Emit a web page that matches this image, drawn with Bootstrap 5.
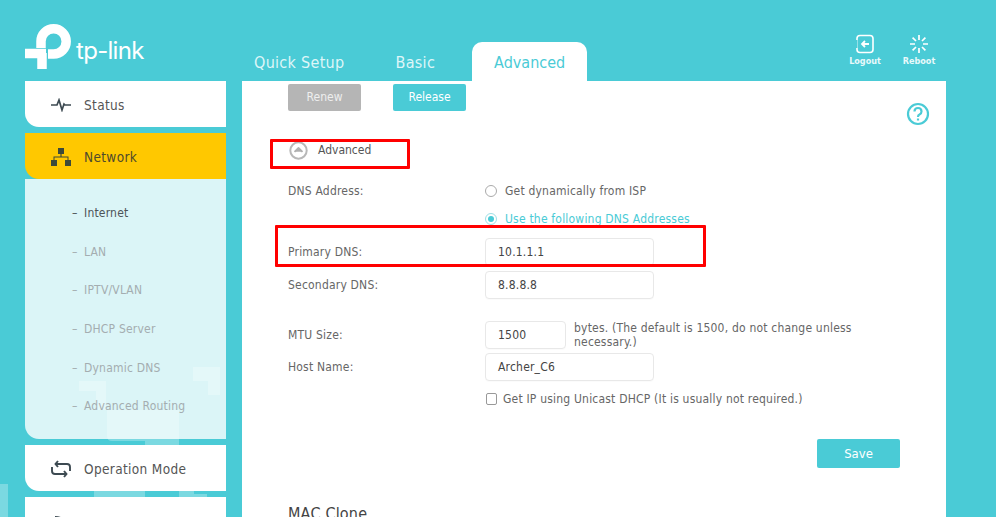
<!DOCTYPE html>
<html lang="en">
<head>
<meta charset="utf-8">
<title>TP-Link Advanced</title>
<link href="https://cdn.jsdelivr.net/npm/bootstrap@5.3.0/dist/css/bootstrap.min.css" rel="stylesheet">
<style>
html,body{height:517px;overflow:hidden}
body{background:#4acbd6;font-family:"DejaVu Sans","Noto Sans",sans-serif;font-stretch:condensed;font-size:12px;letter-spacing:.2px;color:#666;position:relative}
.wm{position:absolute;left:0;top:0;z-index:0}
.shell{position:relative;z-index:1}
.hdr{height:81px}
.logo-wrap{width:232px;padding-left:25px;padding-top:24px}
.logo-word{font-family:"Inter",sans-serif;font-weight:400;font-size:24px;color:#fff;line-height:1;margin-left:5px;margin-top:15px;letter-spacing:-.7px}
.tabs{padding-top:42px}
.tabi{height:39px;padding:0 22px;line-height:42px;font-size:16px;letter-spacing:.3px;color:#def6f8}
.tabi.on{background:#fff;color:#4acbd6;border-radius:10px 10px 0 0;margin-left:15px;letter-spacing:0}
.tabi.mid{margin-left:7px}
.hdr-tools{position:absolute;top:34px;left:838px;gap:0}
.tool{width:54px;color:#e8f9fb;font-size:9px;font-weight:600;line-height:11px;letter-spacing:0}
.tool svg{display:block;margin-bottom:2px}
.side{width:201px;margin-left:25px}
.mitem{height:46px;background:#fff;border-bottom-left-radius:14px;color:#555;font-size:13.5px;letter-spacing:.35px;margin-bottom:6px}
.mitem .ico{width:59px;padding-left:26px}
.mitem .lbl{padding-top:2px}
.mitem.act{background:#ffc800;color:#4f4a2c;margin-bottom:0}
.mitem.last .lbl{padding-top:6px}
.mitem.last .ico{padding-left:29px;padding-top:6px}
.subm{height:260px;background:rgba(255,255,255,.8);border-bottom-left-radius:14px;margin-bottom:6px;padding-top:15px}
.subi{height:38.6px;color:#a4adb0;font-size:12px;padding-left:47px}
.subi.cur{color:#4d5458}
.subi i{font-style:normal;width:12px}
.pane{width:704px;height:436px;margin-left:16px;background:#fff;padding:3px 46px 0;overflow:hidden;position:relative}
.bt{height:27px;width:73px;border-radius:2px;color:#fff;font-size:12px;line-height:27px;text-align:center;letter-spacing:0}
.bt.off{background:#b5b5b5;color:#eee}
.bt.go{background:#4acbd6}
.gap32{margin-left:32px}
.helpi{position:absolute;left:664px;top:21px}
.advrow{margin-top:28px;height:22px;padding-left:1px;gap:10px;color:#555;letter-spacing:0}
.frow{min-height:28px}
.lab{width:197px;flex:none}
.fld{height:28px;width:169px;border:1px solid #e8e8e8;border-radius:4px;padding-left:12px;line-height:27px;color:#444;font-size:12px;box-shadow:0 1px 1px rgba(0,0,0,.02)}
.fld.sm{width:81px}
.rd{width:12px;height:12px;border:1px solid #aaa;border-radius:50%;margin:0 8px 0 0;flex:none;background:#fff}
.rd.on{border-color:#9fdfe5;position:relative}
.rd.on::after{content:"";position:absolute;left:2px;top:2px;width:6px;height:6px;border-radius:50%;background:#4acbd6}
.cb{width:11px;height:12px;border:1px solid #999;border-radius:2px;margin-left:1px;margin-right:6px;flex:none}
.opt{height:27.5px;margin-left:197px}
.optwrap{margin-top:16px}
.teal{color:#4acbd6}
.r1{margin-top:5px}
.r2{margin-top:5px}
.r3{margin-top:22px}
.r4{margin-top:4px}
.r5{margin-top:9px;margin-left:197px;height:18px}
.note{width:300px;margin-left:8px;line-height:14px}
.savebar{margin-top:31px;justify-content:flex-end}
.bt.save{width:83px;height:29px;line-height:29px;font-size:13px}
.mac{font-size:16px;color:#444;margin-top:36px;line-height:20px}
.redbox{position:absolute;border:3px solid #f00;z-index:5;border-radius:1px}
.rb1{left:270px;top:139px;width:140px;height:30px}
.rb2{left:275px;top:225px;width:431px;height:42px}
</style>
</head>
<body>
<svg class="wm" width="996" height="517" viewBox="0 0 996 517" fill="#fff" fill-opacity=".27" aria-hidden="true">
  <path d="M79 381H106V410H96V391H79Z"/>
  <path d="M107 410H179V445H145V441H112Q107 441 107 436Z"/>
  <path d="M193 367H220V395H208V381H193Z"/>
  <path d="M94 491H145V497H94Z"/>
  <path d="M179 491H194V494H207V497H179Z"/>
  <path d="M0 484H8V517H0Z"/>
</svg>
<div class="shell">
  <header class="hdr d-flex">
    <div class="logo-wrap d-flex">
      <svg width="46" height="46" viewBox="25 24 46 46" fill="none" stroke="#fff" stroke-width="9.5"><path d="M41 48V41.3A12.6 12.6 0 1 1 53.6 54H48"/><path d="M25 53.5H46M42 53V69" /></svg>
      <div class="logo-word">tp-link</div>
    </div>
    <nav class="tabs d-flex">
      <div class="tabi">Quick Setup</div>
      <div class="tabi mid">Basic</div>
      <div class="tabi on">Advanced</div>
    </nav>
    <div class="hdr-tools d-flex">
      <div class="tool d-flex flex-column align-items-center">
        <svg width="20" height="20" viewBox="0 0 20 20" fill="none" stroke="#fff" stroke-width="1.6"><rect x="2" y="1.5" width="16" height="17" rx="3"/><path d="M1 6V14" stroke="#4acbd6" stroke-width="3"/><path d="M7 10H14M10 7L7 10L10 13" stroke-width="1.8"/></svg>
        <span>Logout</span>
      </div>
      <div class="tool d-flex flex-column align-items-center">
        <svg width="20" height="20" viewBox="0 0 20 20" fill="none" stroke="#fff" stroke-width="1.7"><path d="M10 1V6M10 14V19M1 10H6M14 10H19M3.6 3.6L7 7M13 13L16.4 16.4M3.6 16.4L7 13M13 7L16.4 3.6"/></svg>
        <span>Reboot</span>
      </div>
    </div>
  </header>
  <div class="d-flex">
    <aside class="side">
      <div class="mitem d-flex align-items-center">
        <div class="ico"><svg width="20" height="14" viewBox="0 0 20 14" fill="none" stroke="#3d4a52" stroke-width="1.7"><path d="M0 7H6L8 2L11 12L13 6L14 7H20"/></svg></div>
        <span class="lbl">Status</span>
      </div>
      <div class="mitem act d-flex align-items-center">
        <div class="ico"><svg width="20" height="18" viewBox="0 0 20 18" fill="#3d4a3a"><rect x="7" y="0" width="6" height="6"/><rect x="0" y="12" width="6" height="6"/><rect x="14" y="12" width="6" height="6"/><path d="M9.4 5H10.6V8.4H17.5V12H16.5V9.6H3.5V12H2.5V8.4H9.4Z"/></svg></div>
        <span class="lbl">Network</span>
      </div>
      <div class="subm">
        <div class="subi cur d-flex align-items-center"><i>–</i><span>Internet</span></div>
        <div class="subi d-flex align-items-center"><i>–</i><span>LAN</span></div>
        <div class="subi d-flex align-items-center"><i>–</i><span>IPTV/VLAN</span></div>
        <div class="subi d-flex align-items-center"><i>–</i><span>DHCP Server</span></div>
        <div class="subi d-flex align-items-center"><i>–</i><span>Dynamic DNS</span></div>
        <div class="subi d-flex align-items-center"><i>–</i><span>Advanced Routing</span></div>
      </div>
      <div class="mitem d-flex align-items-center">
        <div class="ico"><svg width="20" height="18" viewBox="0 0 20 18" fill="none" stroke="#3d4a52" stroke-width="1.9"><path d="M5 4H16Q19 4 19 7V11M15 14H4Q1 14 1 11V7"/><path d="M7 1L4.5 4L7 7M13 11L15.5 14L13 17"/></svg></div>
        <span class="lbl">Operation Mode</span>
      </div>
      <div class="mitem last d-flex align-items-center">
        <div class="ico"><svg width="17" height="17" viewBox="0 0 17 17" fill="none" stroke="#3d4a52" stroke-width="2.2"><path d="M1 2A14 14 0 0 1 15 16M1 8A8 8 0 0 1 9 16"/></svg></div>
        <span class="lbl">Wireless</span>
      </div>
    </aside>
    <main class="pane">
      <div class="d-flex">
        <div class="bt off">Renew</div>
        <div class="bt go gap32">Release</div>
      </div>
      <svg class="helpi" width="24" height="24" viewBox="0 0 24 24" fill="none" stroke="#4acbd6" stroke-width="2.2"><circle cx="12" cy="12" r="10"/><path d="M8.5 9.5Q8.5 6 12 6T15.5 9.5Q15.5 11.5 13.5 12.5Q12 13.2 12 15"/><path d="M12 16.5V18.5"/></svg>
      <div class="advrow d-flex align-items-center">
        <svg width="19" height="19" viewBox="0 0 19 19"><circle cx="9.5" cy="9.5" r="8.2" fill="none" stroke="#b8b8b8" stroke-width="2"/><path d="M5.5 10.8L9.5 7L13.5 10.8" fill="#b0b0b0" stroke="#b0b0b0" stroke-width="1.8" stroke-linejoin="round"/></svg>
        <span>Advanced</span>
      </div>
      <div class="frow d-flex align-items-center optwrap">
        <div class="lab">DNS Address:</div>
        <span class="rd"></span><span>Get dynamically from ISP</span>
      </div>
      <div class="opt d-flex align-items-center"><span class="rd on"></span><span class="teal">Use the following DNS Addresses</span></div>
      <div class="frow d-flex align-items-center r1">
        <div class="lab">Primary DNS:</div><div class="fld">10.1.1.1</div>
      </div>
      <div class="frow d-flex align-items-center r2">
        <div class="lab">Secondary DNS:</div><div class="fld">8.8.8.8</div>
      </div>
      <div class="frow d-flex align-items-center r3">
        <div class="lab">MTU Size:</div><div class="fld sm">1500</div>
        <div class="note">bytes. (The default is 1500, do not change unless necessary.)</div>
      </div>
      <div class="frow d-flex align-items-center r4">
        <div class="lab">Host Name:</div><div class="fld">Archer_C6</div>
      </div>
      <div class="r5 d-flex align-items-center"><span class="cb"></span><span>Get IP using Unicast DHCP (It is usually not required.)</span></div>
      <div class="d-flex savebar"><div class="bt go save">Save</div></div>
      <div class="mac">MAC Clone</div>
    </main>
  </div>
</div>
<div class="redbox rb1"></div>
<div class="redbox rb2"></div>
</body>
</html>
